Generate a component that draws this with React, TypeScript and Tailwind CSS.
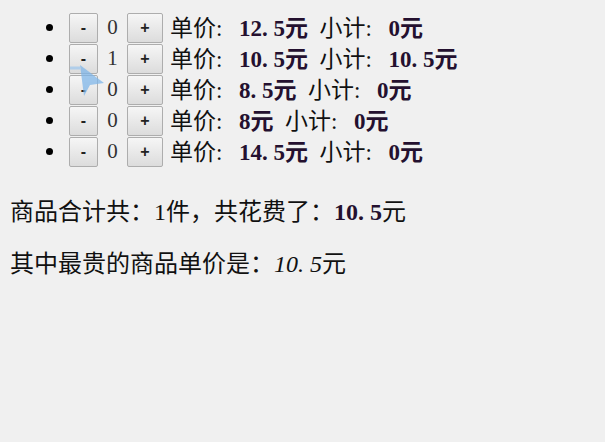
import React from "react";

const items = [
  { qty: 0, price: "12.5", sub: "0" },
  { qty: 1, price: "10.5", sub: "10.5" },
  { qty: 0, price: "8.5", sub: "0" },
  { qty: 0, price: "8", sub: "0" },
  { qty: 0, price: "14.5", sub: "0" },
];

function M({ text }: { text: string }) {
  return (
    <span className="font-['Liberation_Serif',serif]">
      {text.split("").map((c, i) =>
        /[0-9]/.test(c) ? (
          <span key={i}>{c}</span>
        ) : (
          <span key={i} className="inline-block w-[0.5em] whitespace-pre">
            {c}
          </span>
        )
      )}
    </span>
  );
}

function Btn({ label, w }: { label: string; w: string }) {
  return (
    <div
      className={`${w} h-[30px] flex items-center justify-center rounded-[2px] border border-[#adadad] bg-gradient-to-b from-[#f6f6f6] to-[#dcdcdc] text-[16px] font-bold text-[#222] font-['Liberation_Sans',sans-serif]`}
    >
      {label}
    </div>
  );
}

export default function App() {
  return (
    <div className="relative w-[605px] h-[442px] bg-[#f0f0f0] text-[#111] overflow-hidden font-['Noto_Sans_CJK_SC',sans-serif]">
      <ul className="pt-[12px]">
        {items.map((it, i) => (
          <li key={i} className="h-[31px] flex items-center">
            <span className="ml-[46px] w-[7px] h-[7px] rounded-full bg-black" />
            <div className="ml-[16px] flex items-center">
              <Btn label="-" w="w-[29px]" />
              <span className="w-[29px] text-center text-[21px] text-[#333] font-['Liberation_Serif',serif]">
                {it.qty}
              </span>
              <Btn label="+" w="w-[36px]" />
              <span className="ml-[7px] text-[23px] whitespace-pre leading-none">
                单价<M text=": " />
                <b className="text-[#24102f]">
                  <M text={it.price} />元
                </b>
                <M text=" " />小计<M text=": " />
                <b className="text-[#24102f]">
                  <M text={it.sub} />元
                </b>
              </span>
            </div>
          </li>
        ))}
      </ul>
      <p className="mt-[30px] pl-[10px] h-[26px] leading-[26px] text-[24px] whitespace-pre">
        商品合计共：<M text="1" />件，共花费了：
        <b className="text-[#24102f]">
          <M text="10.5" />
        </b>
        元
      </p>
      <p className="mt-[26px] pl-[10px] h-[26px] leading-[26px] text-[24px] whitespace-pre">
        其中最贵的商品单价是：
        <i>
          <M text="10.5" />
        </i>
        元
      </p>
      <svg
        className="absolute left-[66px] top-[62px]"
        width="44"
        height="38"
        viewBox="0 0 44 38"
      >
        <path d="M4 6 L14 6" stroke="#9cc6ee" strokeWidth="3" opacity="0.7" />
        <polygon points="14,3 38,21 24,23 18,34" fill="#7fb6e8" opacity="0.75" />
      </svg>
    </div>
  );
}
